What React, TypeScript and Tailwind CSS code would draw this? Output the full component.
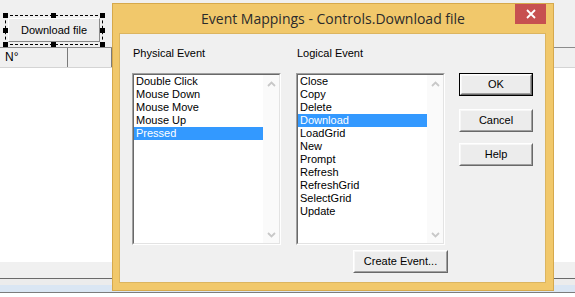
import React from 'react';

const physicalEvents = ['Double Click', 'Mouse Down', 'Mouse Move', 'Mouse Up', 'Pressed'];
const logicalEvents = [
  'Close',
  'Copy',
  'Delete',
  'Download',
  'LoadGrid',
  'New',
  'Prompt',
  'Refresh',
  'RefreshGrid',
  'SelectGrid',
  'Update',
];

function Chevron({ up }: { up?: boolean }) {
  return (
    <svg width="9" height="6" viewBox="0 0 9 6">
      <path
        d={up ? 'M1 5 L4.5 1.5 L8 5' : 'M1 1 L4.5 4.5 L8 1'}
        fill="none"
        stroke="#c8c8c8"
        strokeWidth="1.8"
      />
    </svg>
  );
}

function ListBox({ items, selected }: { items: string[]; selected: string }) {
  return (
    <div className="flex h-[172px] w-[149px] border border-t-[#a0a0a0] border-l-[#a0a0a0] border-r-white border-b-white">
      <div className="flex flex-1 border border-t-[#696969] border-l-[#696969] border-r-[#e3e3e3] border-b-[#e3e3e3] bg-white">
        <div className="flex-1">
          {items.map((item) => (
            <div
              key={item}
              className={`h-[13px] pl-[2px] text-[11px] leading-[13px] whitespace-nowrap ${
                item === selected ? 'bg-[#3399ff] text-white' : 'text-black'
              }`}
            >
              {item}
            </div>
          ))}
        </div>
        <div className="flex w-[16px] flex-col justify-between bg-[#fafafa]">
          <div className="flex h-[17px] items-center justify-center">
            <Chevron up />
          </div>
          <div className="flex h-[17px] items-center justify-center">
            <Chevron />
          </div>
        </div>
      </div>
    </div>
  );
}

function WinButton({ label, width, isDefault }: { label: string; width: string; isDefault?: boolean }) {
  return (
    <div className={`flex h-[23px] ${width} ${isDefault ? 'border border-black' : ''}`}>
      <div className="flex flex-1 border border-t-white border-l-white border-r-[#696969] border-b-[#696969]">
        <div className="flex flex-1 items-center justify-center border border-t-[#f7f7f7] border-l-[#f7f7f7] border-r-[#a0a0a0] border-b-[#a0a0a0] bg-[#ececec] text-[11px] text-black">
          {label}
        </div>
      </div>
    </div>
  );
}

// selection handles sit over the dashed outline of the selected control
const handles = [
  'left-[-3px] top-[-3px]',
  'left-[45px] top-[-3px]',
  'right-[-3px] top-[-3px]',
  'left-[-3px] top-[12px]',
  'right-[-3px] top-[12px]',
  'left-[-3px] bottom-[-3px]',
  'left-[45px] bottom-[-3px]',
  'right-[-3px] bottom-[-3px]',
];

export default function App() {
  return (
    <div className="relative flex h-[297px] w-[575px] flex-col overflow-hidden bg-white font-['Liberation_Sans',Arial,sans-serif]">
      {/* Form designer canvas */}
      <div className="h-[47px] bg-[#f0f0f0] pl-[5px] pt-[15px]">
        <div className="relative flex h-[30px] w-[98px] border border-dashed border-black p-[2px]">
          <div className="flex flex-1 items-center justify-center border border-t-white border-l-white border-r-[#8a8a8a] border-b-[#8a8a8a] bg-[#ededed] text-[11px] text-black">
            Download file
          </div>
          {handles.map((pos) => (
            <div key={pos} className={`absolute h-[5px] w-[5px] bg-black ${pos}`} />
          ))}
        </div>
      </div>

      <div className="flex h-[21px] border-t border-t-[#8c8c8c] border-b border-b-[#d4d4d4] bg-[#f0f0f0] text-[12px] text-black">
        <div className="w-[68px] border-r border-r-[#7a7a7a] pl-[5px] leading-[19px]">N°</div>
        <div className="w-[44px] border-r border-r-[#7a7a7a]" />
      </div>

      <div className="flex-1 bg-white" />

      <div className="h-[16px] bg-[#f0f0f0]" />
      <div className="h-px bg-[#6a6a6a]" />
      <div className="h-[6px] bg-[#ececec]" />
      <div className="h-[7px] bg-[#dae6f3]" />
      <div className="h-px bg-[#7c7c7c]" />
      <div className="h-[4px] bg-white" />

      {/* Event Mappings dialog window */}
      <div className="absolute left-[112px] top-[3px] flex h-[288px] w-[442px] flex-col border border-[#d6a94c] bg-[#f1c86b] pb-[7px] pl-[6px] pr-[7px]">
        <div className="grid h-[29px] grid-cols-[1fr_auto_1fr]">
          <div />
          <div className="self-center pl-[1px] font-['Open_Sans',sans-serif] text-[14px] leading-[20px] text-[#2b2b2b]">
            Event Mappings - Controls.Download file
          </div>
          <div className="flex justify-end">
            <div className="flex h-[20px] w-[31px] items-center justify-center bg-[#c75050]">
              <svg width="10" height="10" viewBox="0 0 10 10">
                <path d="M1 1 L9 9 M9 1 L1 9" stroke="white" strokeWidth="1.8" />
              </svg>
            </div>
          </div>
        </div>

        <div className="flex flex-1 flex-col border border-[#dcb560] bg-[#f0f0f0] pl-[12px] pt-[13px]">
          <div className="flex">
            <div className="flex w-[149px] flex-col">
              <div className="h-[13px] pl-[1px] text-[11px] leading-[13px] text-black">Physical Event</div>
              <div className="mt-[13px]">
                <ListBox items={physicalEvents} selected="Pressed" />
              </div>
            </div>
            <div className="ml-[15px] flex w-[149px] flex-col">
              <div className="h-[13px] pl-[1px] text-[11px] leading-[13px] text-black">Logical Event</div>
              <div className="mt-[13px]">
                <ListBox items={logicalEvents} selected="Download" />
              </div>
              <div className="ml-[57px] mt-[5px]">
                <WinButton label="Create Event..." width="w-[95px]" />
              </div>
            </div>
            <div className="ml-[14px] flex flex-col pt-[26px]">
              <WinButton label="OK" width="w-[74px]" isDefault />
              <div className="mt-[13px]">
                <WinButton label="Cancel" width="w-[74px]" />
              </div>
              <div className="mt-[11px]">
                <WinButton label="Help" width="w-[74px]" />
              </div>
            </div>
          </div>
        </div>
      </div>
    </div>
  );
}
